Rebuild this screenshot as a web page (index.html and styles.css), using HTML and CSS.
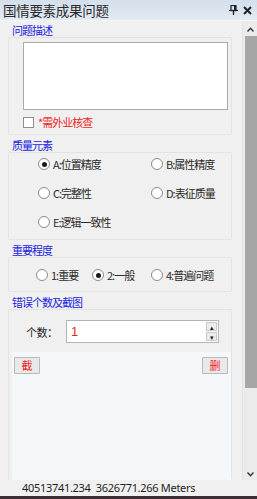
FILE: index.html
```html
<!DOCTYPE html>
<html lang="zh-CN">

<head>
    <meta charset="UTF-8">
    <link rel="stylesheet" href="styles.css">
</head>

<body>
    <div class="dock-window">
        <!-- Title bar -->
        <div class="title-bar">
            <span class="title-text">国情要素成果问题</span>
            <span class="title-btns">
                <svg width="9" height="10" viewBox="0 0 9 10">
                    <rect x="2" y="0.5" width="5" height="5" fill="none" stroke="#222" stroke-width="1.2"/>
                    <rect x="5" y="0.5" width="2" height="5" fill="#222"/>
                    <line x1="0" y1="5.5" x2="9" y2="5.5" stroke="#222" stroke-width="1.2"/>
                    <line x1="4.5" y1="6" x2="4.5" y2="10" stroke="#222" stroke-width="1.4"/>
                </svg>
                <svg width="9" height="9" viewBox="0 0 9 9">
                    <path d="M1 1 L8 8 M8 1 L1 8" stroke="#222" stroke-width="2"/>
                </svg>
            </span>
        </div>

        <div class="main-row">
            <div class="panel">
                <!-- 问题描述 -->
                <div class="group">
                    <div class="group-label">问题描述</div>
                    <div class="group-body desc-body">
                        <div class="text-box"></div>
                        <label class="check-row">
                            <span class="check-box"></span>
                            <span class="red-text">*需外业核查</span>
                        </label>
                    </div>
                </div>

                <!-- 质量元素 -->
                <div class="group">
                    <div class="group-label">质量元素</div>
                    <div class="group-body quality-body">
                        <div class="radio"><span class="dot checked"></span>A:位置精度</div>
                        <div class="radio"><span class="dot"></span>B:属性精度</div>
                        <div class="radio"><span class="dot"></span>C:完整性</div>
                        <div class="radio"><span class="dot"></span>D:表征质量</div>
                        <div class="radio"><span class="dot"></span>E:逻辑一致性</div>
                    </div>
                </div>

                <!-- 重要程度 -->
                <div class="group">
                    <div class="group-label">重要程度</div>
                    <div class="group-body level-body">
                        <div class="radio lv1"><span class="dot"></span>1:重要</div>
                        <div class="radio lv2"><span class="dot checked"></span>2:一般</div>
                        <div class="radio"><span class="dot"></span>4:普遍问题</div>
                    </div>
                </div>

                <!-- 错误个数及截图 -->
                <div class="group last">
                    <div class="group-label">错误个数及截图</div>
                    <div class="group-body count-body">
                        <div class="count-row">
                            <span class="count-label">个数：</span>
                            <div class="spin">
                                <span class="spin-value">1</span>
                                <span class="spin-btns">
                                    <span class="spin-btn">&#9652;</span>
                                    <span class="spin-btn">&#9662;</span>
                                </span>
                            </div>
                        </div>
                        <div class="shot-area">
                            <div class="shot-btns">
                                <button class="small-btn">截</button>
                                <button class="small-btn">删</button>
                            </div>
                        </div>
                    </div>
                </div>
            </div>

            <!-- Vertical scrollbar -->
            <div class="scrollbar">
                <div class="arrow">
                    <svg width="7" height="5" viewBox="0 0 7 5"><path d="M0.5 4.5 L3.5 1.2 L6.5 4.5" fill="none" stroke="#333" stroke-width="1.4"/></svg>
                </div>
                <div class="track">
                    <div class="thumb"></div>
                </div>
                <div class="arrow">
                    <svg width="7" height="5" viewBox="0 0 7 5"><path d="M0.5 0.5 L3.5 3.8 L6.5 0.5" fill="none" stroke="#333" stroke-width="1.4"/></svg>
                </div>
            </div>
        </div>

        <div class="status-bar">40513741.234&nbsp;&nbsp;3626771.266 Meters</div>
    </div>
</body>

</html>
```

FILE: styles.css
```css
body {
    margin: 0;
    font-family: 'Noto Sans CJK SC', sans-serif;
    color: #222;
    background: #f0f0f0;
}

.dock-window {
    width: 257px;
    height: 499px;
    display: flex;
    flex-direction: column;
    overflow: hidden;
    border-bottom: 3px solid #3d2d34;
    box-sizing: border-box;
}

.title-bar {
    height: 21px;
    flex: none;
    display: flex;
    align-items: center;
    justify-content: space-between;
    padding: 0 5px 0 3px;
    background: linear-gradient(#d3dfec, #e2eaf3);
    border-bottom: 1px solid #f4f7fa;
    box-sizing: border-box;
}

.title-text {
    font-size: 13.5px;
    letter-spacing: -0.3px;
    color: #2a2a2a;
}

.title-btns {
    display: flex;
    align-items: center;
    gap: 5px;
}

.main-row {
    flex: 1;
    display: flex;
    min-height: 0;
}

.panel {
    flex: 1;
    padding: 2px 10px 0 8px;
    display: flex;
    flex-direction: column;
    gap: 3px;
    border-right: 1px solid #e2e2e2;
}

.group-label {
    height: 14px;
    line-height: 14px;
    font-size: 11px;
    letter-spacing: -1px;
    color: #2222e0;
    padding-left: 4px;
}

.group-body {
    border: 1px solid #e3e3e3;
    border-radius: 2px;
    box-sizing: border-box;
}

/* 问题描述 */
.desc-body {
    padding: 4px 3px 6px 14px;
}

.text-box {
    height: 68px;
    background: #fff;
    border: 1px solid #a9a9a9;
    box-sizing: border-box;
}

.check-row {
    display: flex;
    align-items: center;
    gap: 4px;
    margin-top: 6px;
    height: 12px;
}

.check-box {
    width: 11px;
    height: 11px;
    border: 1px solid #8f8f8f;
    background: #fff;
    box-sizing: border-box;
}

.red-text {
    font-size: 11px;
    letter-spacing: -1px;
    color: #f02424;
}

/* radio buttons */
.radio {
    display: flex;
    align-items: center;
    height: 14px;
    font-size: 11px;
    letter-spacing: -1px;
    color: #2a2a2a;
}

.dot {
    width: 12px;
    height: 12px;
    border: 1px solid #8a8a8a;
    border-radius: 50%;
    background: #fff;
    box-sizing: border-box;
    margin-right: 3px;
    position: relative;
    flex: none;
}

.dot.checked::after {
    content: "";
    position: absolute;
    left: 2.5px;
    top: 2.5px;
    width: 5px;
    height: 5px;
    border-radius: 50%;
    background: #1a1a1a;
}

.quality-body {
    display: grid;
    grid-template-columns: 113px 1fr;
    row-gap: 15px;
    padding: 4px 0 10px 29px;
}

.level-body {
    display: flex;
    padding: 10px 0 9px 27px;
}

.lv1 {
    width: 56px;
}

.lv2 {
    width: 59px;
}

/* 错误个数及截图 */
.group.last {
    flex: 1;
    display: flex;
    flex-direction: column;
}

.count-body {
    flex: 1;
    display: flex;
    flex-direction: column;
    border-bottom: none;
}

.count-row {
    display: flex;
    align-items: center;
    padding: 10px 0 0 17px;
}

.count-label {
    width: 40px;
    font-size: 11px;
    letter-spacing: -0.5px;
}

.spin {
    width: 153px;
    height: 23px;
    background: #fff;
    border: 1px solid #b4b4b4;
    box-sizing: border-box;
    display: flex;
    align-items: center;
    justify-content: space-between;
}

.spin-value {
    font-family: 'Liberation Sans', sans-serif;
    font-size: 13px;
    color: #e8262a;
    padding-left: 4px;
}

.spin-btns {
    display: flex;
    flex-direction: column;
    gap: 1px;
    margin-right: 1px;
}

.spin-btn {
    width: 11px;
    height: 9px;
    font-size: 7px;
    line-height: 9px;
    text-align: center;
    background: #ececec;
    border: 1px solid #c8c8c8;
    box-sizing: border-box;
    color: #222;
}

.shot-area {
    flex: 1;
    margin: 9px 0 0 3px;
    background: #f5f8fb;
}

.shot-btns {
    display: flex;
    justify-content: space-between;
    padding: 5px 3px 0 2px;
}

.small-btn {
    width: 26px;
    height: 17px;
    padding: 0;
    font-family: 'Noto Sans CJK SC', sans-serif;
    font-size: 11px;
    line-height: 15px;
    color: #f02424;
    background: #e9e9e9;
    border: 1px solid #b9b9b9;
    border-radius: 1px;
}

/* scrollbar */
.scrollbar {
    width: 14px;
    flex: none;
    display: flex;
    flex-direction: column;
    background: #ebebeb;
    padding-top: 2px;
}

.arrow {
    height: 12px;
    display: flex;
    align-items: center;
    justify-content: center;
}

.track {
    flex: 1;
    padding: 1px 0 0 2px;
}

.thumb {
    height: 352px;
    background: #a6a6a6;
}

.status-bar {
    height: 16px;
    flex: none;
    padding-left: 22px;
    font-family: 'Noto Sans', sans-serif;
    font-size: 11px;
    letter-spacing: -0.3px;
    line-height: 16px;
    color: #1e1e1e;
    background: #f0f0f0;
}
```
